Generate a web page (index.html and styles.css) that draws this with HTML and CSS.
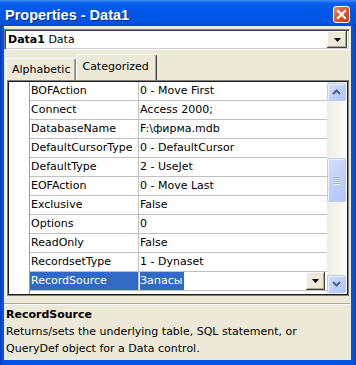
FILE: index.html
```html
<!DOCTYPE html>
<html>

<head>
    <link rel="stylesheet" href="styles.css">
</head>

<body>
    <div class="window">
        <div class="titlebar">
            <span class="title">Properties - Data1</span>
            <svg class="close" width="17" height="17" viewBox="0 0 17 17">
                <defs>
                    <linearGradient id="cg" x1="0" y1="0" x2="1" y2="1">
                        <stop offset="0" stop-color="#f08a63" />
                        <stop offset="0.5" stop-color="#e1552c" />
                        <stop offset="1" stop-color="#c23a14" />
                    </linearGradient>
                </defs>
                <rect x="0.5" y="0.5" width="16" height="16" rx="2.5" fill="url(#cg)" stroke="#fff" />
                <path d="M5 5 L12 12 M12 5 L5 12" stroke="#fff" stroke-width="2.2" stroke-linecap="square" />
            </svg>
        </div>
        <div class="frame">
            <div class="client">
                <div class="combo">
                    <span class="combo-text"><b>Data1</b> Data</span>
                    <span class="btn combo-btn">
                        <svg width="7" height="4" viewBox="0 0 7 4"><path d="M0 0 H7 L3.5 4 Z" fill="#000" /></svg>
                    </span>
                </div>

                <div class="tabs">
                    <span class="tab">Alphabetic</span>
                    <span class="tab active">Categorized</span>
                </div>

                <div class="panel">
                    <div class="grid">
                        <div class="gutter"></div>
                        <div class="rows">
                            <div class="row"><span class="name">BOFAction</span><span class="value">0 - Move First</span></div>
                            <div class="row"><span class="name">Connect</span><span class="value">Access 2000;</span></div>
                            <div class="row"><span class="name">DatabaseName</span><span class="value">F:\фирма.mdb</span></div>
                            <div class="row"><span class="name">DefaultCursorType</span><span class="value">0 - DefaultCursor</span></div>
                            <div class="row"><span class="name">DefaultType</span><span class="value">2 - UseJet</span></div>
                            <div class="row"><span class="name">EOFAction</span><span class="value">0 - Move Last</span></div>
                            <div class="row"><span class="name">Exclusive</span><span class="value">False</span></div>
                            <div class="row"><span class="name">Options</span><span class="value">0</span></div>
                            <div class="row"><span class="name">ReadOnly</span><span class="value">False</span></div>
                            <div class="row"><span class="name">RecordsetType</span><span class="value">1 - Dynaset</span></div>
                            <div class="row selected">
                                <span class="name">RecordSource</span>
                                <span class="value"><span class="sel-text">Запасы</span>
                                    <span class="btn value-btn">
                                        <svg width="7" height="4" viewBox="0 0 7 4"><path d="M0 0 H7 L3.5 4 Z" fill="#000" /></svg>
                                    </span>
                                </span>
                            </div>
                        </div>
                        <div class="vscroll">
                            <div class="sb-btn">
                                <svg width="9" height="6" viewBox="0 0 9 6"><path d="M1 5 L4.5 1.5 L8 5" fill="none" stroke="#4d6185" stroke-width="2" /></svg>
                            </div>
                            <div class="sb-track top"></div>
                            <div class="sb-thumb">
                                <span class="grip"></span>
                                <span class="grip"></span>
                                <span class="grip"></span>
                                <span class="grip"></span>
                            </div>
                            <div class="sb-track bottom"></div>
                            <div class="sb-btn">
                                <svg width="9" height="6" viewBox="0 0 9 6"><path d="M1 1 L4.5 4.5 L8 1" fill="none" stroke="#4d6185" stroke-width="2" /></svg>
                            </div>
                        </div>
                    </div>
                </div>

                <div class="desc">
                    <div class="desc-title">RecordSource</div>
                    <div class="desc-text">Returns/sets the underlying table, SQL statement, or QueryDef object for a Data control.</div>
                </div>
            </div>
        </div>
    </div>
</body>

</html>
```

FILE: styles.css
```css
body {
    margin: 0;
    background: #fff;
}

.window {
    width: 356px;
    height: 365px;
    display: flex;
    flex-direction: column;
    background: #0054e3;
    font-family: "DejaVu Sans", Tahoma, sans-serif;
    font-size: 11px;
    color: #000;
}

/* title bar */
.titlebar {
    height: 26px;
    display: flex;
    align-items: center;
    justify-content: space-between;
    padding: 3px 6px 0 5px;
    box-sizing: border-box;
    background: linear-gradient(#3d8ef7 0%, #0a5fee 12%, #0057e8 40%, #0054e3 85%, #0048cc 100%);
}

.title {
    color: #fff;
    font-family: "Liberation Sans", Arial, sans-serif;
    font-weight: bold;
    font-size: 14.5px;
    text-shadow: 1px 1px #0a2a8c;
}

.close {
    display: block;
}

.frame {
    flex: 1;
    display: flex;
    padding: 0 5px 5px 4px;
    background: linear-gradient(90deg, #0034b0 0, #0054e3 2px, #0054e3 calc(100% - 2px), #0034b0 100%);
}

.client {
    flex: 1;
    display: flex;
    flex-direction: column;
    background: #ece9d8;
    padding: 3px 1px 0 2px;
}

/* object combo */
.combo {
    height: 21px;
    margin-left: -2px;
    box-sizing: border-box;
    display: flex;
    align-items: center;
    justify-content: space-between;
    background: #fff;
    border-top: 1px solid #808080;
    border-left: 1px solid #808080;
    border-right: 1px solid #fff;
    border-bottom: 1px solid #fff;
    box-shadow: inset 1px 1px #404040, inset -1px -1px #d4d0c8;
    padding: 0 2px 0 3px;
}

.btn {
    display: flex;
    align-items: center;
    justify-content: center;
    background: #ece9d8;
    box-shadow: inset -1px -1px #404040, inset 1px 1px #fff, inset -2px -2px #aca899;
}

.combo-btn {
    width: 20px;
    height: 17px;
}

/* tabs */
.tabs {
    display: flex;
    align-items: flex-end;
    height: 30px;
}

.tab {
    height: 22px;
    box-sizing: border-box;
    padding: 4px 5px 0 5px;
    border-top: 1px solid #fff;
    border-left: 1px solid #fff;
    border-right: 1px solid #808080;
    border-radius: 2px 2px 0 0;
    box-shadow: inset -1px 0 #aca899;
}

.tab.active {
    height: 26px;
    padding-top: 5px;
    padding-right: 7px;
    border-right-color: #404040;
}

.panel {
    border-left: 1px solid #fff;
}

/* property grid */
.grid {
    height: 216px;
    box-sizing: border-box;
    display: flex;
    background: #fff;
    border: 1px solid #808080;
    box-shadow: inset 0 0 0 1px #1c1c1c;
    padding: 1px 1px 1px 2px;
    margin-right: 1px;
    overflow: hidden;
}

.gutter {
    width: 19px;
    background: #fff;
    border-right: 1px solid #a0a0a0;
}

.rows {
    flex: 1;
    background: #fff;
}

.row {
    height: 18px;
    display: flex;
    border-bottom: 1px solid #c0c0c0;
    line-height: 18px;
    white-space: nowrap;
}

.name {
    width: 107px;
    padding-left: 1px;
    border-right: 1px solid #c0c0c0;
    overflow: hidden;
}

.value {
    flex: 1;
    display: flex;
    padding-left: 1px;
}

.selected .name {
    background: #316ac5;
    color: #fff;
}

.sel-text {
    background: #316ac5;
    color: #fff;
    padding-right: 2px;
}

.value-btn {
    width: 19px;
    height: 18px;
    margin-left: auto;
    margin-right: 2px;
}

/* scrollbar */
.vscroll {
    width: 20px;
    display: flex;
    flex-direction: column;
    background: linear-gradient(90deg, #eeede5, #fbfbf8);
}

.sb-btn,
.sb-thumb {
    height: 18px;
    margin: 1px 1px 1px 0;
    box-sizing: border-box;
    border: 1px solid #b8cdf5;
    border-radius: 2px;
    background: linear-gradient(135deg, #d3defa, #bccffb 60%, #b0c6f8);
    box-shadow: inset 1px 1px #eaf0fd;
    display: flex;
    align-items: center;
    justify-content: center;
}

.sb-track.top {
    height: 55px;
}

.sb-track.bottom {
    flex: 1;
}

.sb-thumb {
    height: 44px;
    flex-direction: column;
    gap: 1px;
}

.grip {
    width: 7px;
    height: 1px;
    background: #8caef0;
    box-shadow: 0 1px #eef3fe;
}

/* description */
.desc {
    flex: 1;
    margin: 7px 0 0 -2px;
    border-top: 1px solid #aca899;
    box-shadow: inset 0 1px #fff;
    padding: 2px 2px 0 2px;
    line-height: 17px;
}

.desc-title {
    font-weight: bold;
}
```
